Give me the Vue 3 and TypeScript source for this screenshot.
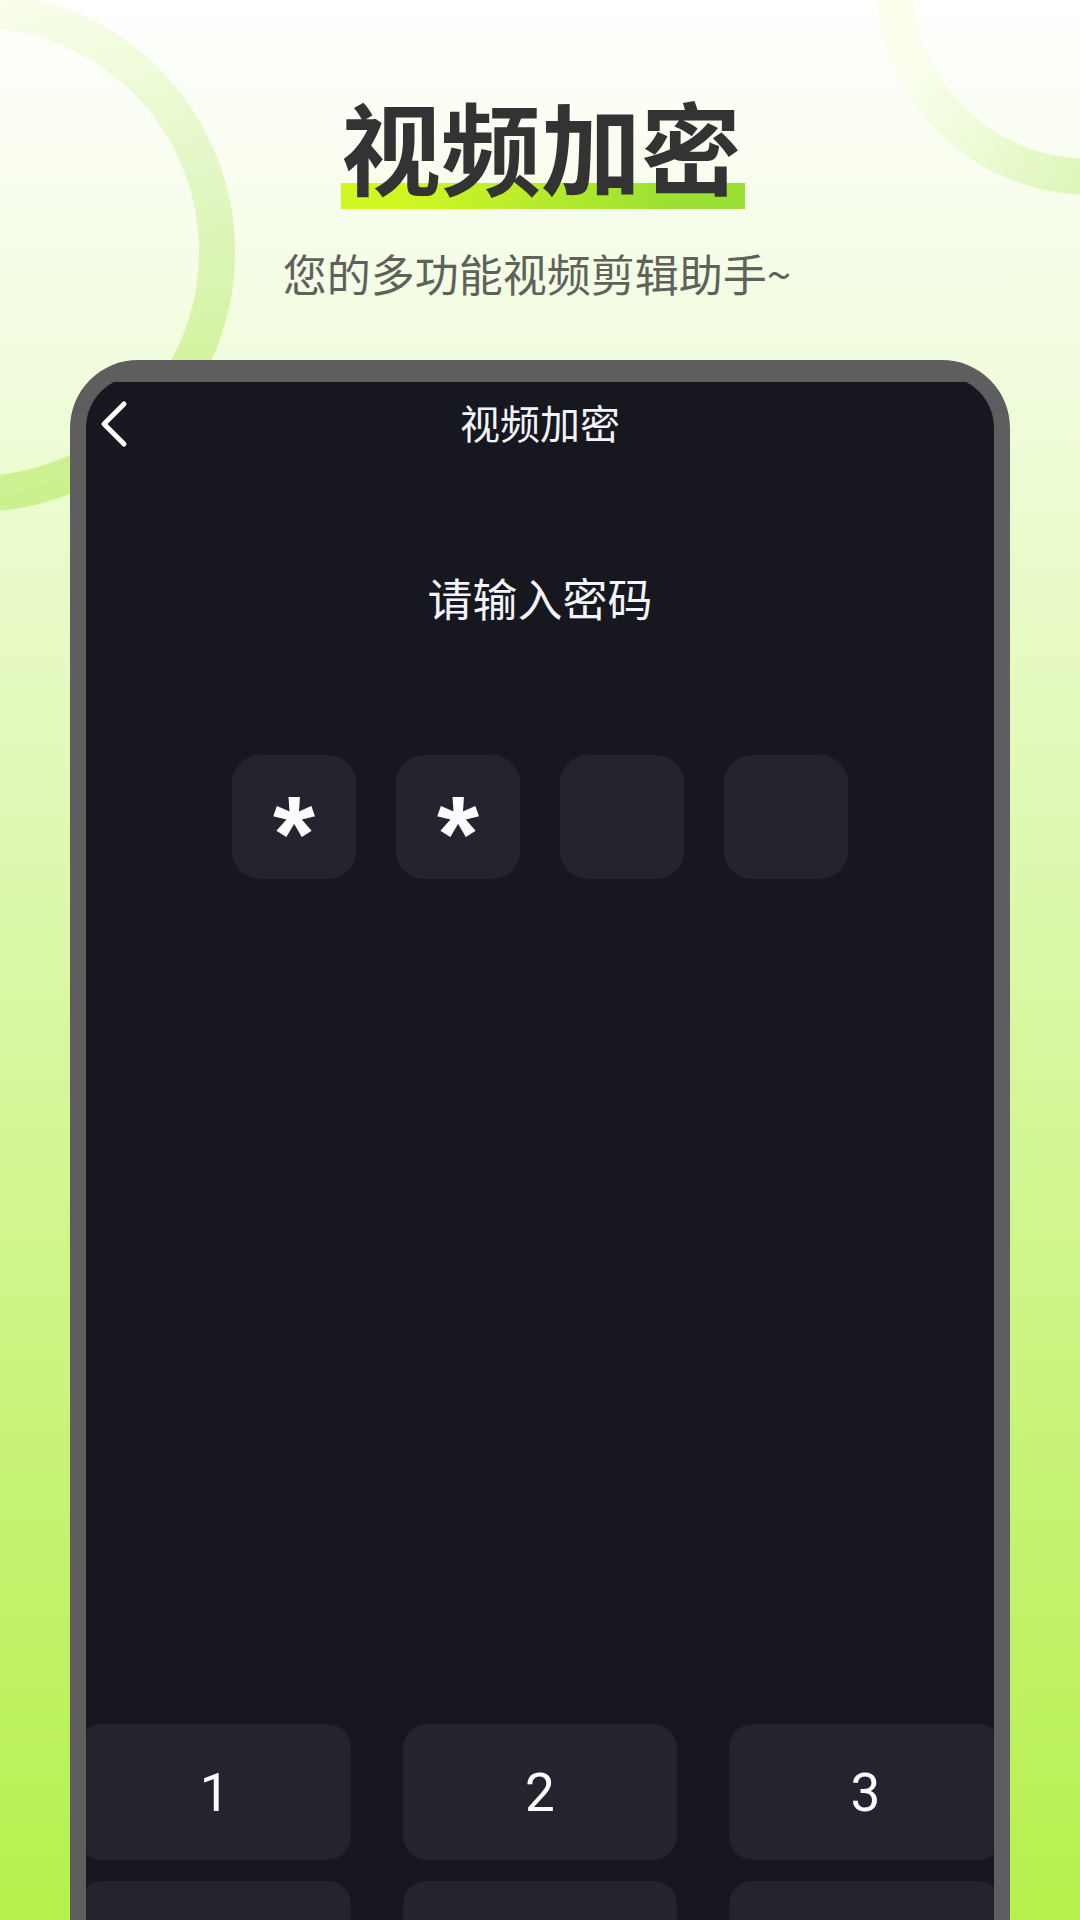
<script setup lang="ts">
import { ref } from 'vue'

interface Key {
  value: number
  showLabel: boolean
}

const pins = ref<string[]>(['*', '*', '', ''])

// Only the first row of labels is inside the visible part of the keypad.
const keys: Key[] = [1, 2, 3, 4, 5, 6].map((value) => ({ value, showLabel: value <= 3 }))
</script>

<template>
  <main class="page">
    <svg class="ring ring-left" viewBox="0 0 520 520" aria-hidden="true">
      <defs>
        <linearGradient id="ringLeft" x1="0.3" y1="0" x2="0.6" y2="1">
          <stop offset="0" stop-color="#fcfff0" />
          <stop offset="0.5" stop-color="#e3f7c5" />
          <stop offset="1" stop-color="#cbf18f" />
        </linearGradient>
      </defs>
      <circle cx="260" cy="260" r="242" fill="none" stroke="url(#ringLeft)" stroke-width="36" />
    </svg>
    <svg class="ring ring-right" viewBox="0 0 428 428" aria-hidden="true">
      <defs>
        <linearGradient id="ringRight" gradientUnits="userSpaceOnUse" x1="40" y1="290" x2="240" y2="410">
          <stop offset="0" stop-color="#faffee" />
          <stop offset="1" stop-color="#dbf5b3" />
        </linearGradient>
      </defs>
      <circle cx="214" cy="214" r="196" fill="none" stroke="url(#ringRight)" stroke-width="36" />
    </svg>

    <header class="hero">
      <h1 class="title">视频加密</h1>
      <p class="subtitle">您的多功能视频剪辑助手~</p>
    </header>

    <section class="phone">
      <div class="screen">
        <div class="topbar">
          <button class="back" type="button" aria-label="返回">
            <svg viewBox="0 0 28 48" width="28" height="48" aria-hidden="true">
              <path d="M24 4 4 24l20 20" fill="none" stroke="#fff" stroke-width="5" stroke-linecap="round" stroke-linejoin="round" />
            </svg>
          </button>
          <h2 class="bar-title">视频加密</h2>
        </div>
        <p class="prompt">请输入密码</p>
        <div class="pins">
          <input
            v-for="(pin, i) in pins"
            :key="i"
            class="pin"
            type="text"
            maxlength="1"
            readonly
            :value="pin"
            :aria-label="`密码第${i + 1}位`"
          />
        </div>
        <div class="keypad">
          <button v-for="key in keys" :key="key.value" class="key" type="button" :aria-label="String(key.value)">
            <template v-if="key.showLabel">{{ key.value }}</template>
          </button>
        </div>
      </div>
    </section>
  </main>
</template>

<style>
body {
  margin: 0;
}
</style>

<style scoped>
.page {
  position: relative;
  display: flex;
  flex-direction: column;
  height: 100vh;
  overflow: hidden;
  background: linear-gradient(180deg, #ffffff 0%, #b5f04c 100%);
  font-family: "Noto Sans CJK SC", "Noto Sans", sans-serif;
}

.ring {
  position: absolute;
}

.ring-left {
  top: -8px;
  left: -285px;
  width: 520px;
}

.ring-right {
  top: -233px;
  right: -224px;
  width: 428px;
}

.hero {
  position: relative;
  display: flex;
  flex-direction: column;
  align-items: center;
  height: 360px;
  box-sizing: border-box;
  padding-top: 85px;
}

.title {
  margin: 0 0 0 6px;
  padding: 0 4px 4px 0;
  font-size: 100px;
  line-height: 120px;
  font-weight: 700;
  color: #333333;
  background: linear-gradient(100deg, #d1f722 15%, #99df34 85%) 0 100% / 100% 26px no-repeat;
}

.subtitle {
  margin: 32px 0 0;
  padding-right: 6px;
  font-size: 44px;
  line-height: 64px;
  font-weight: 400;
  color: #5e625b;
}

.phone {
  position: relative;
  flex: 1;
  min-height: 0;
  display: flex;
  margin: 0 70px;
  border: 16px solid #5e5e5e;
  border-bottom: 0;
  border-radius: 68px 68px 0 0;
  background: #5e5e5e;
}

.screen {
  flex: 1;
  min-width: 0;
  display: flex;
  flex-direction: column;
  overflow: hidden;
  border-radius: 52px 52px 0 0;
  background: linear-gradient(#5e5e5e 6px, #17171f 6px);
}

.topbar {
  display: grid;
  grid-template-columns: 60px 1fr 60px;
  align-items: center;
  height: 96px;
}

.back {
  display: flex;
  margin: 0;
  padding: 0 0 0 14px;
  border: 0;
  background: none;
}

.bar-title {
  margin: 0;
  padding-bottom: 4px;
  font-size: 40px;
  line-height: 60px;
  font-weight: 400;
  text-align: center;
  color: #f3f3fa;
}

.prompt {
  margin: 92px 0 0;
  font-size: 45px;
  line-height: 68px;
  text-align: center;
  color: #f3f3fa;
}

.pins {
  display: flex;
  justify-content: center;
  gap: 40px;
  margin-top: 123px;
}

.pin {
  width: 124px;
  height: 124px;
  box-sizing: border-box;
  margin: 0;
  padding: 32px 0 0;
  border: 0;
  border-radius: 28px;
  outline: 0;
  background: #24242e;
  color: #fcfcff;
  font-family: "Liberation Sans", sans-serif;
  font-size: 108px;
  font-weight: 700;
  line-height: 92px;
  text-align: center;
}

.keypad {
  display: grid;
  grid-template-columns: repeat(3, 1fr);
  grid-auto-rows: 136px;
  gap: 21px 52px;
  flex: none;
  height: 196px;
  margin: auto -8px 0;
}

.key {
  margin: 0;
  padding: 2px 0 0;
  border: 0;
  border-radius: 24px;
  background: #24242e;
  color: #fcfcff;
  font-family: Roboto, sans-serif;
  font-size: 53px;
  line-height: 64px;
}
</style>
